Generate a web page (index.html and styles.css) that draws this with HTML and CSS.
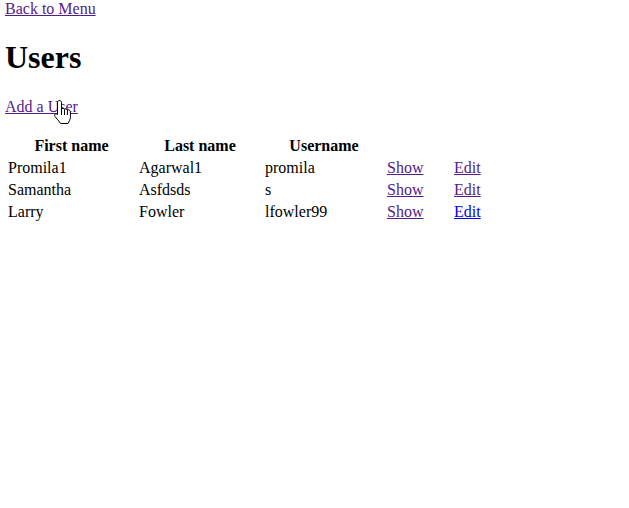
FILE: index.html
```html
<!DOCTYPE html>
<html>
<head>
<meta charset="utf-8">
<link rel="stylesheet" href="styles.css">
</head>
<body>
<div class="top"><a class="visited" href="#menu">Back to Menu</a></div>
<h1>Users</h1>
<p class="add"><a class="visited" href="#new">Add a User</a><svg class="cursor" width="20" height="26" viewBox="0 0 20 26"><path d="M6.5 1.5 C7.6 1.5 8.5 2.3 8.5 3.4 L8.5 10 C9 9.2 11 9.2 11.5 10.3 C12.2 9.6 14 9.8 14.4 11 C15.2 10.5 17 10.8 17.3 12.3 L17.5 17.5 C17.5 20.5 16 22.5 15 24.5 L7.5 24.5 C6 22 3.5 19.5 2 17.5 C1.2 16.3 1.8 14.6 3.2 14.8 C4 15 4.5 15.6 4.5 15.6 L4.5 3.4 C4.5 2.3 5.4 1.5 6.5 1.5 Z" fill="#fff" stroke="#000" stroke-width="1" stroke-linejoin="round"/><path d="M8.5 10 L8.5 16 M11.5 10.3 L11.5 16 M14.4 11 L14.4 16" stroke="#000" stroke-width="1" fill="none"/></svg></p>
<table class="users">
<thead>
<tr><th class="c1">First name</th><th class="c2">Last name</th><th class="c3">Username</th><th class="c4"></th><th class="c5"></th></tr>
</thead>
<tbody>
<tr><td>Promila1</td><td>Agarwal1</td><td>promila</td><td><a class="visited" href="#s1">Show</a></td><td><a class="visited" href="#e1">Edit</a></td></tr>
<tr><td>Samantha</td><td>Asfdsds</td><td>s</td><td><a class="visited" href="#s2">Show</a></td><td><a class="visited" href="#e2">Edit</a></td></tr>
<tr><td>Larry</td><td>Fowler</td><td>lfowler99</td><td><a class="visited" href="#s3">Show</a></td><td><a class="link" href="#e3">Edit</a></td></tr>
</tbody>
</table>
</body>
</html>
```
FILE: styles.css
```css
html { background: #fff; }
body {
  margin: 0 5px;
  font-family: "Liberation Serif", "Times New Roman", serif;
  font-size: 16px;
  color: #000;
}
a { color: #0000ee; text-decoration: underline; }
a.visited { color: #551a8b; }
a.link { color: #0000ee; }
h1 {
  font-size: 32px;
  font-weight: bold;
  margin: 21.44px 0;
}
.add { margin: 16px 0 18px; position: relative; }
.cursor {
  position: absolute;
  left: 48px;
  top: 1px;
}
.users { border-spacing: 2px; }
.users th, .users td { padding: 1px; text-align: left; }
.users th { text-align: center; font-weight: bold; }
.c1 { width: 127px; }
.c2 { width: 122px; }
.c3 { width: 118px; }
.c4 { width: 63px; }
.c5 { width: 28px; }
```
